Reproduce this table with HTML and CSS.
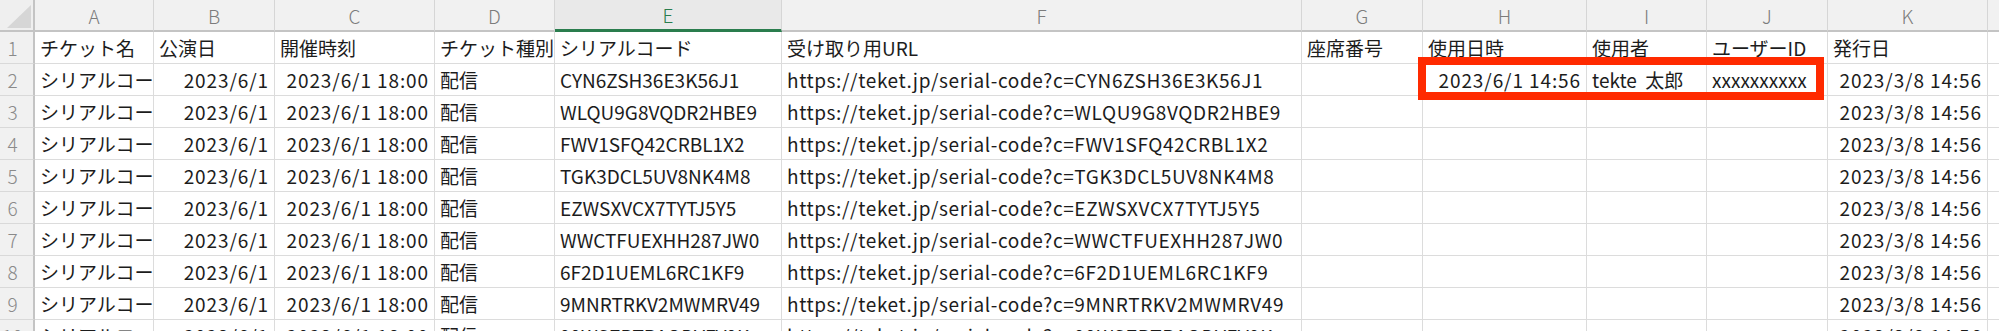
FILE: index.html
```html
<!DOCTYPE html>
<html lang="ja">
<head>
<meta charset="utf-8">
<title>Sheet</title>
<link rel="stylesheet" href="styles.css">
</head>
<body>
<div class="sheet">
  <div class="grid">
    <div class="corner"><svg width="35" height="32" viewBox="0 0 35 32"><polygon points="7,28 31,28 31,5" fill="#d6d6d6"/></svg></div>
    <div class="ch">A</div><div class="ch">B</div><div class="ch">C</div><div class="ch">D</div><div class="ch sel">E</div><div class="ch">F</div><div class="ch">G</div><div class="ch">H</div><div class="ch">I</div><div class="ch">J</div><div class="ch">K</div><div class="ch"></div>

    <div class="rh">1</div><div class="c">チケット名</div><div class="c">公演日</div><div class="c">開催時刻</div><div class="c">チケット種別</div><div class="c">シリアルコード</div><div class="c">受け取り用URL</div><div class="c">座席番号</div><div class="c">使用日時</div><div class="c">使用者</div><div class="c">ユーザーID</div><div class="c">発行日</div><div class="c"></div>

    <div class="rh">2</div><div class="c">シリアルコード</div><div class="c r">2023/6/1</div><div class="c r">2023/6/1 18:00</div><div class="c">配信</div><div class="c">CYN6ZSH36E3K56J1</div><div class="c url">https://teket.jp/serial-code?c=CYN6ZSH36E3K56J1</div><div class="c"></div><div class="c r">2023/6/1 14:56</div><div class="c">tekte  太郎</div><div class="c">xxxxxxxxxx</div><div class="c r">2023/3/8 14:56</div><div class="c"></div>

    <div class="rh">3</div><div class="c">シリアルコード</div><div class="c r">2023/6/1</div><div class="c r">2023/6/1 18:00</div><div class="c">配信</div><div class="c">WLQU9G8VQDR2HBE9</div><div class="c url">https://teket.jp/serial-code?c=WLQU9G8VQDR2HBE9</div><div class="c"></div><div class="c"></div><div class="c"></div><div class="c"></div><div class="c r">2023/3/8 14:56</div><div class="c"></div>

    <div class="rh">4</div><div class="c">シリアルコード</div><div class="c r">2023/6/1</div><div class="c r">2023/6/1 18:00</div><div class="c">配信</div><div class="c">FWV1SFQ42CRBL1X2</div><div class="c url">https://teket.jp/serial-code?c=FWV1SFQ42CRBL1X2</div><div class="c"></div><div class="c"></div><div class="c"></div><div class="c"></div><div class="c r">2023/3/8 14:56</div><div class="c"></div>

    <div class="rh">5</div><div class="c">シリアルコード</div><div class="c r">2023/6/1</div><div class="c r">2023/6/1 18:00</div><div class="c">配信</div><div class="c">TGK3DCL5UV8NK4M8</div><div class="c url">https://teket.jp/serial-code?c=TGK3DCL5UV8NK4M8</div><div class="c"></div><div class="c"></div><div class="c"></div><div class="c"></div><div class="c r">2023/3/8 14:56</div><div class="c"></div>

    <div class="rh">6</div><div class="c">シリアルコード</div><div class="c r">2023/6/1</div><div class="c r">2023/6/1 18:00</div><div class="c">配信</div><div class="c">EZWSXVCX7TYTJ5Y5</div><div class="c url">https://teket.jp/serial-code?c=EZWSXVCX7TYTJ5Y5</div><div class="c"></div><div class="c"></div><div class="c"></div><div class="c"></div><div class="c r">2023/3/8 14:56</div><div class="c"></div>

    <div class="rh">7</div><div class="c">シリアルコード</div><div class="c r">2023/6/1</div><div class="c r">2023/6/1 18:00</div><div class="c">配信</div><div class="c">WWCTFUEXHH287JW0</div><div class="c url">https://teket.jp/serial-code?c=WWCTFUEXHH287JW0</div><div class="c"></div><div class="c"></div><div class="c"></div><div class="c"></div><div class="c r">2023/3/8 14:56</div><div class="c"></div>

    <div class="rh">8</div><div class="c">シリアルコード</div><div class="c r">2023/6/1</div><div class="c r">2023/6/1 18:00</div><div class="c">配信</div><div class="c">6F2D1UEML6RC1KF9</div><div class="c url">https://teket.jp/serial-code?c=6F2D1UEML6RC1KF9</div><div class="c"></div><div class="c"></div><div class="c"></div><div class="c"></div><div class="c r">2023/3/8 14:56</div><div class="c"></div>

    <div class="rh">9</div><div class="c">シリアルコード</div><div class="c r">2023/6/1</div><div class="c r">2023/6/1 18:00</div><div class="c">配信</div><div class="c">9MNRTRKV2MWMRV49</div><div class="c url">https://teket.jp/serial-code?c=9MNRTRKV2MWMRV49</div><div class="c"></div><div class="c"></div><div class="c"></div><div class="c"></div><div class="c r">2023/3/8 14:56</div><div class="c"></div>

    <div class="rh">10</div><div class="c">シリアルコード</div><div class="c r">2023/6/1</div><div class="c r">2023/6/1 18:00</div><div class="c">配信</div><div class="c">99WSZBTRAQDVFV9K</div><div class="c url">https://teket.jp/serial-code?c=99WSZBTRAQDVFV9K</div><div class="c"></div><div class="c"></div><div class="c"></div><div class="c"></div><div class="c r">2023/3/8 14:56</div><div class="c"></div>
  </div>
  <div class="mark"></div>
</div>
</body>
</html>
```
FILE: styles.css
```css
html, body {
  margin: 0;
  padding: 0;
  background: #ffffff;
  overflow: hidden;
}
.sheet {
  position: relative;
  width: 1999px;
  height: 331px;
  overflow: hidden;
  font-family: "Noto Sans CJK JP", "Noto Sans", sans-serif;
  font-size: 19px;
  color: #1c1c1c;
}
.grid {
  display: grid;
  grid-template-columns: 35px 119px 121px 160px 120px 227px 520px 121px 164px 120px 121px 160px 120px;
  grid-template-rows: 32px;
  grid-auto-rows: 32px;
}
.corner {
  background: #efefef;
  border-right: 2px solid #c4c4c4;
  border-bottom: 2px solid #c4c4c4;
  box-sizing: border-box;
  overflow: hidden;
}
.corner svg { display: block; }
.ch {
  background: #f1f1f1;
  border-right: 1px solid #d6d6d6;
  border-bottom: 2px solid #c4c4c4;
  box-sizing: border-box;
  color: #7c7c7c;
  font-size: 19px;
  font-weight: 300;
  display: flex;
  align-items: center;
  justify-content: center;
  line-height: 1;
}
.ch.sel {
  color: #2a7d4e;
  border-bottom: 3px solid #2a7d4e;
  background: #e9e9e9;
}
.rh {
  background: #f1f1f1;
  border-right: 2px solid #c4c4c4;
  border-bottom: 1px solid #d9d9d9;
  box-sizing: border-box;
  color: #8a8a8a;
  font-weight: 300;
  display: flex;
  align-items: center;
  justify-content: center;
  padding-right: 8px;
  line-height: 1;
}
.c {
  border-right: 1px solid #dcdcdc;
  border-bottom: 1px solid #dcdcdc;
  box-sizing: border-box;
  padding: 0 5px;
  display: flex;
  align-items: center;
  white-space: pre;
  overflow: hidden;
  line-height: 1;
}
.c.r {
  justify-content: flex-end;
  letter-spacing: 0.9px;
}
.c.url {
  letter-spacing: 0.6px;
}
.mark {
  position: absolute;
  left: 1418px;
  top: 57px;
  width: 406px;
  height: 43px;
  box-sizing: border-box;
  border: 8px solid #ff2a00;
}
```
